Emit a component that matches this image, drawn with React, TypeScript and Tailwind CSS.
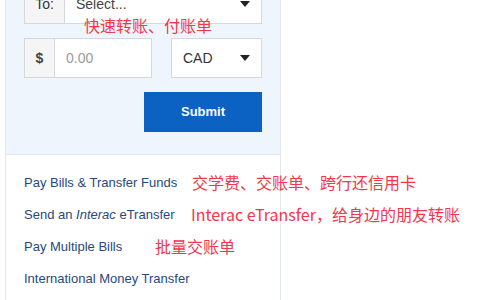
import React from "react";

const red = "text-[#f2374b]";
const cjk = "[font-family:'Noto_Sans_CJK_SC','Noto_Sans',sans-serif]";

function Caret() {
  return (
    <svg width="10" height="6" viewBox="0 0 10 6" className="shrink-0">
      <path d="M0 0h10L5 6z" fill="#222" />
    </svg>
  );
}

function LinkRow({ children, note, noteX }: { children: React.ReactNode; note: string; noteX: string }) {
  return (
    <div className="relative h-8 flex items-center">
      <a href="#" className="text-[13px] text-[#28497c] leading-none">
        {children}
      </a>
      <span className={`absolute top-1/2 -translate-y-1/2 text-[16px] leading-none whitespace-nowrap ${red} ${cjk} ${noteX}`}>
        {note}
      </span>
    </div>
  );
}

export default function App() {
  return (
    <div className="w-[480px] h-[300px] overflow-hidden bg-white font-['Liberation_Sans',Arial,sans-serif]">
      <div className="ml-[5px] w-[276px] h-[320px] border-x border-[#e3e8ee]">
        {/* transfer form */}
        <div className="flex flex-col bg-[#eef5fd] h-[155px] border-b border-[#e1e8f0] px-[18px]">
          <div className="relative -mt-4 h-10 shrink-0 flex border border-[#d4d8dc] bg-white">
            <div className="w-10 shrink-0 bg-[#f5f5f5] border-r border-[#d4d8dc] flex items-center justify-center text-[14px] text-[#333]">
              To:
            </div>
            <div className="flex-1 flex items-center justify-between pl-[11px] pr-[11px] text-[14px] text-[#444]">
              <span>Select...</span>
              <Caret />
            </div>
            <span className={`absolute left-[59px] top-[32px] text-[16px] leading-none whitespace-nowrap ${red} ${cjk}`}>
              快速转账、付账单
            </span>
          </div>

          <div className="mt-[14px] flex justify-between">
            <div className="h-10 w-[128px] flex border border-[#d4d8dc] bg-white">
              <div className="w-[30px] shrink-0 bg-[#f5f5f5] border-r border-[#d4d8dc] flex items-center justify-center text-[14px] font-bold text-[#444]">
                $
              </div>
              <div className="flex-1 flex items-center pl-[11px] text-[14px] text-[#9a9a9a]">0.00</div>
            </div>
            <div className="h-10 w-[91px] border border-[#d4d8dc] bg-white flex items-center justify-between pl-[11px] pr-[11px] text-[14px] text-[#333]">
              <span>CAD</span>
              <Caret />
            </div>
          </div>

          <div className="mt-[14px] flex justify-end">
            <button className="w-[118px] h-10 bg-[#0b62c2] text-white text-[13px] font-bold">Submit</button>
          </div>
        </div>

        {/* quick links */}
        <div className="px-[18px] pt-[11px]">
          <LinkRow note="交学费、交账单、跨行还信用卡" noteX="left-[168px]">
            Pay Bills &amp; Transfer Funds
          </LinkRow>
          <LinkRow note="Interac eTransfer，给身边的朋友转账" noteX="left-[167px]">
            Send an <i>Interac</i> eTransfer
          </LinkRow>
          <LinkRow note="批量交账单" noteX="left-[131px]">
            Pay Multiple Bills
          </LinkRow>
          <div className="h-8 flex items-center">
            <a href="#" className="text-[13px] text-[#28497c] leading-none">
              International Money Transfer
            </a>
          </div>
        </div>
      </div>
    </div>
  );
}
